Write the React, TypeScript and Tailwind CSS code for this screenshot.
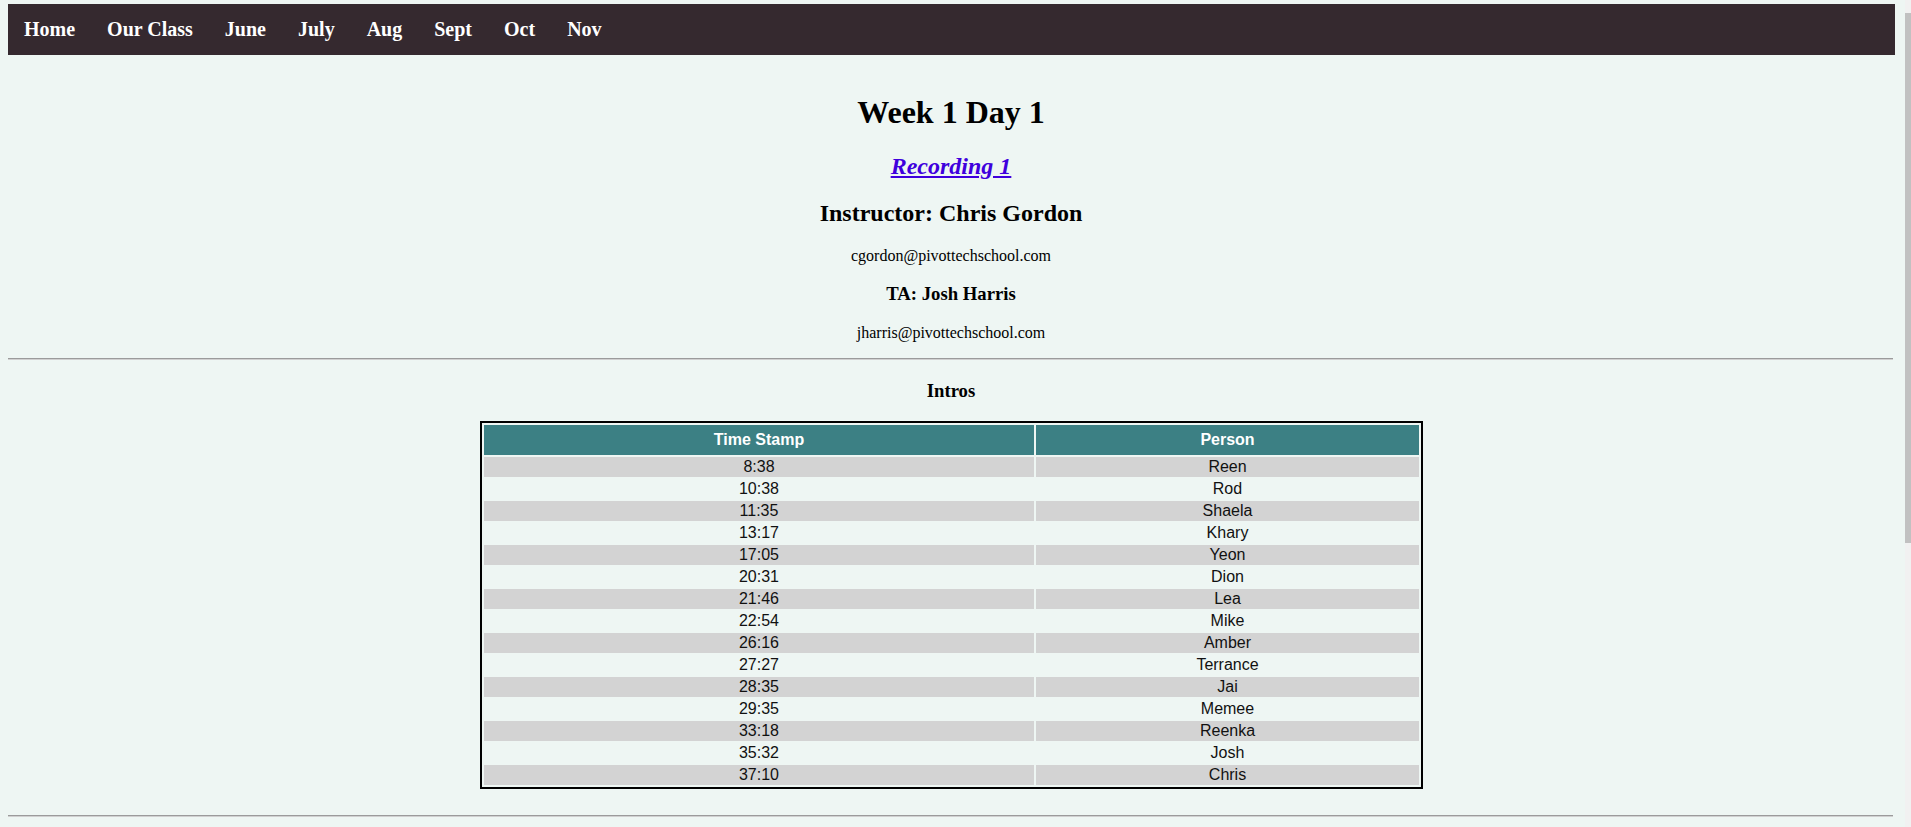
import React from "react";

const links = ["Home", "Our Class", "June", "July", "Aug", "Sept", "Oct", "Nov"];

const rows: [string, string][] = [
  ["8:38", "Reen"],
  ["10:38", "Rod"],
  ["11:35", "Shaela"],
  ["13:17", "Khary"],
  ["17:05", "Yeon"],
  ["20:31", "Dion"],
  ["21:46", "Lea"],
  ["22:54", "Mike"],
  ["26:16", "Amber"],
  ["27:27", "Terrance"],
  ["28:35", "Jai"],
  ["29:35", "Memee"],
  ["33:18", "Reenka"],
  ["35:32", "Josh"],
  ["37:10", "Chris"],
];

function Rule() {
  return <div className="h-0 border-t border-b border-t-[#9b9b9b] border-b-[#d0d0d0]" />;
}

export default function App() {
  return (
    <div className="flex h-[827px] w-[1911px] overflow-hidden bg-[#eef6f3] font-['Liberation_Serif','Times_New_Roman',serif] text-black">
      <div className="min-w-0 flex-1">
        <nav className="mt-[4px] ml-[8px] mr-[10px] flex h-[51px] items-center bg-[#35292f]">
          {links.map((l) => (
            <a key={l} className="px-4 text-[20px] font-bold leading-[23px] text-white">
              {l}
            </a>
          ))}
        </nav>
        <div className="ml-[8px] mr-[12px] text-center">
          <h1 className="mt-[39px] pl-[1px] text-[32px] font-bold leading-[37px]">Week 1 Day 1</h1>
          <h2 className="mt-[21px] pl-[1px] text-[24px] font-bold italic leading-[28px]">
            <a className="text-[#3f00dd] underline">Recording 1</a>
          </h2>
          <h2 className="mt-[19px] pl-[1px] text-[24px] font-bold leading-[28px]">Instructor: Chris Gordon</h2>
          <p className="mt-[20px] pl-[1px] text-[16px] leading-[18px]">cgordon@pivottechschool.com</p>
          <h3 className="mt-[18px] pl-[1px] text-[18.72px] font-bold leading-[22px]">TA: Josh Harris</h3>
          <p className="mt-[19px] pl-[1px] text-[16px] leading-[18px]">jharris@pivottechschool.com</p>
          <div className="mt-[16px]">
            <Rule />
          </div>
          <h3 className="mt-[20px] pl-[1px] text-[18.72px] font-bold leading-[22px]">Intros</h3>
          <table className="mt-[19px] ml-[472px] w-[943px] table-fixed border-separate border-spacing-[2px] border-2 border-black font-['Liberation_Sans',Arial,sans-serif] text-[16px]">
            <colgroup>
              <col className="w-[550px]" />
              <col className="w-[383px]" />
            </colgroup>
            <thead>
              <tr>
                <th className="h-[30px] bg-[#3c8084] p-0 text-center font-bold leading-[18px] text-white">Time Stamp</th>
                <th className="h-[30px] bg-[#3c8084] p-0 text-center font-bold leading-[18px] text-white">Person</th>
              </tr>
            </thead>
            <tbody>
              {rows.map(([t, p], i) => (
                <tr key={t}>
                  <td className={`h-[20px] p-0 text-center leading-[18px] text-[#111] ${i % 2 === 0 ? "bg-[#d3d3d3]" : ""}`}>{t}</td>
                  <td className={`h-[20px] p-0 text-center leading-[18px] text-[#111] ${i % 2 === 0 ? "bg-[#d3d3d3]" : ""}`}>{p}</td>
                </tr>
              ))}
            </tbody>
          </table>
          <div className="mt-[26px]">
            <Rule />
          </div>
        </div>
      </div>
      <div className="flex w-[6px] flex-col">
        <div className="h-[13px] bg-[#f1f1f1]" />
        <div className="h-[530px] bg-[#c1c1c1]" />
        <div className="flex-1 bg-[#f1f1f1]" />
      </div>
    </div>
  );
}
